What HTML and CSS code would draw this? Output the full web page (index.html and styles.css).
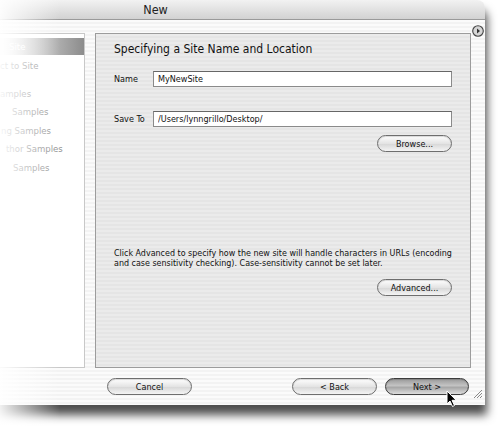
FILE: index.html
```html
<!DOCTYPE html>
<html lang="en">
<head>
  <meta charset="UTF-8">
  <title>New</title>
  <link rel="stylesheet" href="styles.css">
</head>
<body>
  <div class="window">
    <div class="titlebar">New</div>
    <span class="info-btn"><svg width="12" height="12" viewBox="0 0 12 12"><circle cx="6" cy="6" r="5.3" fill="#d6d6d6" stroke="#444" stroke-width="1.1"/><path d="M5 3.5 L8 6 L5 8.5 Z" fill="#333"/></svg></span>

    <div class="content">
      <ul class="sidebar">
        <li class="selected">Site</li>
        <li>ct to Site</li>
        <li class="group">amples</li>
        <li>Samples</li>
        <li>ng Samples</li>
        <li>thor Samples</li>
        <li>Samples</li>
      </ul>

      <div class="panel">
        <h2>Specifying a Site Name and Location</h2>
        <label class="field">Name <input type="text" value="MyNewSite"></label>
        <label class="field field-save">Save To <input type="text" value="/Users/lynngrillo/Desktop/"></label>
        <div class="right"><button>Browse...</button></div>
        <p class="note">Click Advanced to specify how the new site will handle characters in URLs (encoding<br>and case sensitivity checking). Case-sensitivity cannot be set later.</p>
        <div class="right"><button>Advanced...</button></div>
      </div>

      <div class="footer">
        <button class="cancel">Cancel</button>
        <button class="back">&lt; Back</button>
        <button class="default">Next &gt;</button>
      </div>
    </div>

    <span class="grip"><svg width="11" height="11" viewBox="0 0 11 11"><path d="M10 2 L2 10 M10 5 L5 10 M10 8 L8 10" stroke="#888" stroke-width="1"/></svg></span>
  </div>

  <div class="fade"></div>

  <svg class="cursor" width="12" height="18" viewBox="0 0 12 18"><path d="M1 1 L1 14 L4 11 L6.5 16.5 L8.5 15.5 L6 10.3 L10.2 10.3 Z" fill="#000" stroke="#fff" stroke-width="1"/></svg>
</body>
</html>
```

FILE: styles.css
```css
body { margin: 0; width: 500px; height: 429px; overflow: hidden; background: #fff; position: relative; font-family: "DejaVu Sans Condensed", "DejaVu Sans", sans-serif; color: #111; }

.window { position: relative; margin-left: -174px; width: 659px; height: 405px; border-top-right-radius: 8px; background: repeating-linear-gradient(#fbfbfb 0 2px, #f3f3f3 2px 4px); box-shadow: 2px 10px 10px rgba(0,0,0,0.7); }
.titlebar { height: 20px; box-sizing: border-box; border-bottom: 1px solid #9a9a9a; border-top-right-radius: 8px; background: linear-gradient(#f2f2f2, #d2d2d2); text-align: center; font-size: 12.5px; line-height: 20px; color: #222; }

.content { display: grid; grid-template-columns: 239px 376px; grid-template-rows: 335px 37px; column-gap: 10px; padding: 13px 14px 0 20px; }

.sidebar { list-style: none; margin: 0; padding: 4px 0 0; background: #fff; border: 1px solid #c8c8c8; border-left: none; font-size: 9.5px; color: #8e8e8e; }
.sidebar li { height: 18.5px; line-height: 18.5px; padding-left: 154px; }
.sidebar li.selected { height: 17px; line-height: 17px; margin-bottom: 2px; background: linear-gradient(to right, #fff 150px, #8c8c8c); color: #fff; padding-left: 163px; }
.sidebar li.group { margin-top: 9px; padding-left: 154px; }
.sidebar li:nth-child(4) { padding-left: 166px; }
.sidebar li:nth-child(5) { padding-left: 155px; }
.sidebar li:nth-child(6) { padding-left: 160px; }
.sidebar li:nth-child(7) { padding-left: 167px; }

.panel { box-sizing: border-box; border: 1px solid #9c9c9c; background: repeating-linear-gradient(#ebebeb 0 2px, #e5e5e5 2px 4px); padding: 8px 18px 0 18px; font-size: 9px; }
.panel h2 { margin: 0 0 15px; font-weight: normal; font-size: 12px; color: #111; }
.field { display: flex; align-items: center; }
.field input { margin-left: auto; width: 299px; height: 16px; box-sizing: border-box; border: 1px solid #8a8a8a; border-top-color: #666; background: #fff; font: inherit; padding: 0 4px; color: #111; }
.field-save { margin-top: 24px; }
.right { display: flex; justify-content: flex-end; margin-top: 8px; }
.note { margin: 96px 0 0; font-size: 8.9px; line-height: 10px; }
.note + .right { margin-top: 11px; }

button { font: inherit; font-size: 9px; width: 75px; height: 17px; padding: 0; border: 1px solid #6e6e6e; border-radius: 9px; background: linear-gradient(#ffffff, #e4e4e4 50%, #d6d6d6 51%, #f4f4f4); color: #111; box-shadow: inset 0 1px 1px rgba(0,0,0,0.15); }

.footer { grid-column: 2; display: flex; align-items: center; padding: 0 2px 0 12px; }
.footer button { width: 85px; }
.footer .back { margin-left: auto; }
.footer .default { margin-left: 8px; width: 84px; background: linear-gradient(#9a9a9a, #c4c4c4 45%, #a6a6a6 55%, #dcdcdc); border-color: #3c3c3c; }

.info-btn { position: absolute; left: 646px; top: 22px; }
.grip { position: absolute; right: 2px; bottom: 2px; }
.fade { position: absolute; left: 0; top: 0; width: 60px; height: 429px; background: linear-gradient(to right, rgba(255,255,255,0.92), rgba(255,255,255,0)); pointer-events: none; }
.cursor { position: absolute; left: 446px; top: 390px; }
```
